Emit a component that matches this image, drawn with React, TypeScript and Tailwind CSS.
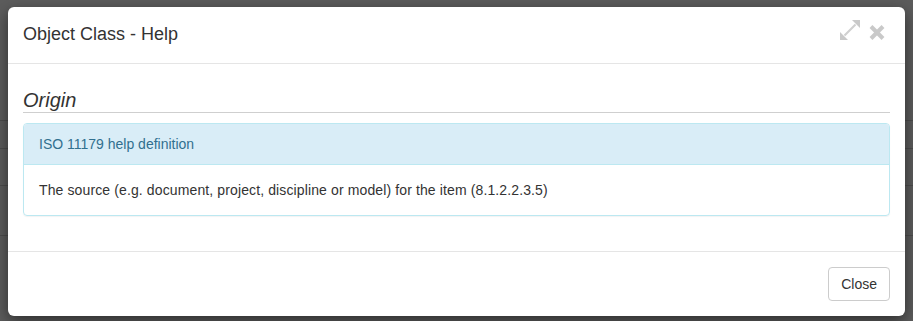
import React from "react";

export default function App() {
  return (
    <div
      className="relative w-[913px] h-[321px] overflow-hidden bg-[#5c5c5c] text-[#333]"
      style={{ fontFamily: '"Liberation Sans", Arial, Helvetica, sans-serif' }}
    >
      {/* page behind backdrop */}
      <div className="flex flex-col">
        <div className="h-[121px] border-b border-[#4d4d4d]" />
        <div className="h-[28px] border-b border-[#4d4d4d]" />
        <div className="h-[37px] border-b border-[#4d4d4d]" />
        <div className="h-[50px] border-b border-[#4d4d4d]" />
      </div>

      {/* modal */}
      <div className="absolute left-[8px] top-[7px] w-[897px] bg-white rounded-[6px] shadow-[0_5px_15px_rgba(0,0,0,0.5)]">
        <div className="flex items-start justify-between px-[15px] py-[15px] border-b border-[#e5e5e5]">
          <h4 className="text-[18px] leading-[25.714px] m-0">Object Class - Help</h4>
          <div className="flex items-start gap-[9px] mr-[5px]">
            <svg width="20" height="20" viewBox="0 0 20 20" className="mt-[-2px]">
              <polygon points="12,0 20,0 20,8" fill="#c9c9c9" />
              <polygon points="0,12 0,20 8,20" fill="#c9c9c9" />
              <line x1="4.5" y1="15.5" x2="15.5" y2="4.5" stroke="#d0d0d0" strokeWidth="2.2" />
            </svg>
            <svg width="16" height="15" viewBox="0 0 16 15" className="mt-[3px]">
              <line x1="2" y1="1.5" x2="14" y2="13.5" stroke="#c9c9c9" strokeWidth="4" />
              <line x1="14" y1="1.5" x2="2" y2="13.5" stroke="#c9c9c9" strokeWidth="4" />
            </svg>
          </div>
        </div>

        <div className="px-[15px] pt-[15px] pb-[15px]">
          <h3 className="italic text-[20px] leading-[22px] mt-[10px] mb-[10px] pb-[1px] border-b border-[#cfcfcf]">
            Origin
          </h3>
          <div className="mb-[20px] border border-[#bce8f1] rounded-[4px] shadow-[0_1px_1px_rgba(0,0,0,0.05)]">
            <div className="bg-[#d9edf7] text-[#31708f] px-[15px] py-[10px] text-[14px] leading-[20px] border-b border-[#bce8f1] rounded-t-[3px]">
              ISO 11179 help definition
            </div>
            <div className="px-[15px] py-[15px] text-[14px] leading-[20px] tracking-[0.12px]">
              The source (e.g. document, project, discipline or model) for the item (8.1.2.2.3.5)
            </div>
          </div>
        </div>

        <div className="flex justify-end px-[15px] py-[15px] border-t border-[#e5e5e5]">
          <button className="px-[12px] py-[6px] text-[14px] leading-[20px] border border-[#ccc] rounded-[4px] bg-white text-[#333]">
            Close
          </button>
        </div>
      </div>
    </div>
  );
}
